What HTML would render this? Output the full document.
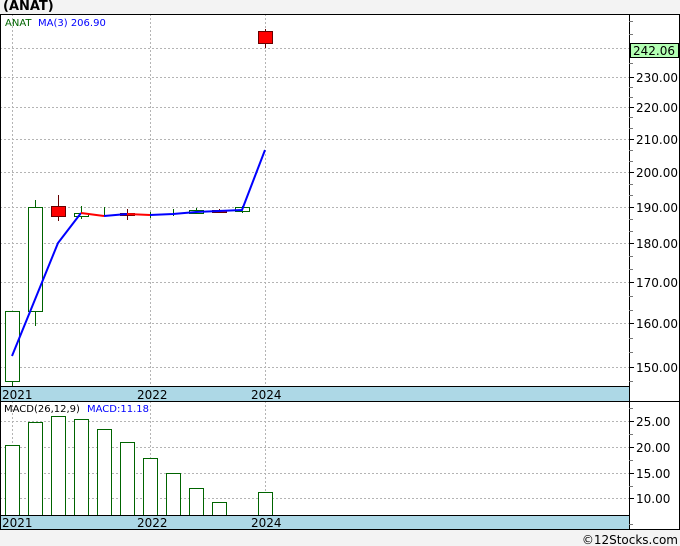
<!DOCTYPE html><html><head><style>
body{margin:0;width:680px;height:546px;background:#f3f3f3;font-family:"DejaVu Sans","Liberation Sans",sans-serif;overflow:hidden;position:relative}
.t{position:absolute;white-space:nowrap}
</style></head><body>
<div class="t" style="left:3px;top:-1px;font:bold 13px 'DejaVu Sans',sans-serif;color:#000">(ANAT)</div>
<svg width="680" height="546" style="position:absolute;left:0;top:0" font-family="DejaVu Sans, Liberation Sans, sans-serif">
<rect x="0" y="14" width="680" height="516" fill="#fff"/>
<rect x="0" y="387" width="629" height="14" fill="#add8e6"/>
<rect x="0" y="515" width="629" height="15" fill="#add8e6"/>
<g stroke="#b4b4b4" stroke-dasharray="2,2" stroke-width="1">
<line x1="0" x2="629" y1="48.5" y2="48.5"/><line x1="0" x2="629" y1="77.5" y2="77.5"/><line x1="0" x2="629" y1="107.5" y2="107.5"/><line x1="0" x2="629" y1="139.5" y2="139.5"/><line x1="0" x2="629" y1="172.5" y2="172.5"/><line x1="0" x2="629" y1="207.5" y2="207.5"/><line x1="0" x2="629" y1="243.5" y2="243.5"/><line x1="0" x2="629" y1="282.5" y2="282.5"/><line x1="0" x2="629" y1="323.5" y2="323.5"/><line x1="0" x2="629" y1="367.5" y2="367.5"/>
<line x1="0" x2="629" y1="421.5" y2="421.5"/><line x1="0" x2="629" y1="447.5" y2="447.5"/><line x1="0" x2="629" y1="473.5" y2="473.5"/><line x1="0" x2="629" y1="498.5" y2="498.5"/>
<line x1="12.5" x2="12.5" y1="14" y2="387"/><line x1="150.5" x2="150.5" y1="14" y2="387"/><line x1="265.5" x2="265.5" y1="14" y2="387"/>
<line x1="12.5" x2="12.5" y1="401" y2="515"/><line x1="150.5" x2="150.5" y1="401" y2="515"/><line x1="265.5" x2="265.5" y1="401" y2="515"/>
</g>
<g stroke="#006400" fill="#fff">
<line x1="12.5" x2="12.5" y1="381" y2="386"/><rect x="5.5" y="311.5" width="14" height="70"/>
<line x1="35.5" x2="35.5" y1="200" y2="326"/><rect x="28.5" y="207.5" width="14" height="104"/>
<line x1="81.5" x2="81.5" y1="206" y2="219"/><rect x="74.5" y="213.5" width="14" height="3"/>
<line x1="104.5" x2="104.5" y1="207" y2="216"/><line x1="150.5" x2="150.5" y1="212" y2="218"/><line x1="173.5" x2="173.5" y1="209" y2="216"/>
<line x1="196.5" x2="196.5" y1="208" y2="214"/><rect x="189.5" y="210.5" width="14" height="3"/>
<line x1="242.5" x2="242.5" y1="206" y2="213"/><rect x="235.5" y="207.5" width="14" height="4"/>
</g>
<g stroke="#600" fill="#f00">
<line x1="58.5" x2="58.5" y1="195" y2="221"/><rect x="51.5" y="206.5" width="14" height="10"/>
<line x1="127.5" x2="127.5" y1="209" y2="220"/><rect x="120.5" y="213.5" width="14" height="2"/>
<line x1="219.5" x2="219.5" y1="209" y2="213"/><rect x="212.5" y="210.5" width="14" height="2"/>
<line x1="265.5" x2="265.5" y1="29" y2="48"/><rect x="258.5" y="31.5" width="14" height="12"/>
</g>
<polyline fill="none" stroke="#00f" stroke-width="2" points="12,356 58,243 81,213"/>
<polyline fill="none" stroke="#f00" stroke-width="2" points="81,213 104,216"/>
<polyline fill="none" stroke="#00f" stroke-width="2" points="104,216 127,214"/>
<polyline fill="none" stroke="#f00" stroke-width="2" points="127,214 150,215"/>
<polyline fill="none" stroke="#00f" stroke-width="2" points="150,215 173,214 196,212 219,211 242,210 265,150"/>
<g stroke="#006400" fill="#fff">
<rect x="5.5" y="445.5" width="14" height="70"/><rect x="28.5" y="422.5" width="14" height="93"/><rect x="51.5" y="416.5" width="14" height="99"/><rect x="74.5" y="419.5" width="14" height="96"/><rect x="97.5" y="429.5" width="14" height="86"/><rect x="120.5" y="442.5" width="14" height="73"/><rect x="143.5" y="458.5" width="14" height="57"/><rect x="166.5" y="473.5" width="14" height="42"/><rect x="189.5" y="488.5" width="14" height="27"/><rect x="212.5" y="502.5" width="14" height="13"/><rect x="258.5" y="492.5" width="14" height="23"/>
</g>
<g stroke="#000" fill="none">
<rect x="0.5" y="14.5" width="679" height="515"/>
<line x1="629.5" x2="629.5" y1="14" y2="530"/>
<line x1="0" x2="629" y1="386.5" y2="386.5"/><line x1="0" x2="680" y1="401.5" y2="401.5"/><line x1="0" x2="629" y1="515.5" y2="515.5"/>
</g>
<g stroke="#000">
<line x1="629" x2="634" y1="77.5" y2="77.5"/><line x1="629" x2="634" y1="107.5" y2="107.5"/><line x1="629" x2="634" y1="139.5" y2="139.5"/><line x1="629" x2="634" y1="172.5" y2="172.5"/><line x1="629" x2="634" y1="207.5" y2="207.5"/><line x1="629" x2="634" y1="243.5" y2="243.5"/><line x1="629" x2="634" y1="282.5" y2="282.5"/><line x1="629" x2="634" y1="323.5" y2="323.5"/><line x1="629" x2="634" y1="367.5" y2="367.5"/>
<line x1="629" x2="634" y1="421.5" y2="421.5"/><line x1="629" x2="634" y1="447.5" y2="447.5"/><line x1="629" x2="634" y1="473.5" y2="473.5"/><line x1="629" x2="634" y1="498.5" y2="498.5"/>
</g>
<g stroke="#777">
<line x1="629" x2="633" y1="21.5" y2="21.5"/><line x1="629" x2="633" y1="34.5" y2="34.5"/><line x1="629" x2="633" y1="63.5" y2="63.5"/><line x1="629" x2="633" y1="87.5" y2="87.5"/><line x1="629" x2="633" y1="97.5" y2="97.5"/><line x1="629" x2="633" y1="117.5" y2="117.5"/><line x1="629" x2="633" y1="128.5" y2="128.5"/><line x1="629" x2="633" y1="150.5" y2="150.5"/><line x1="629" x2="633" y1="161.5" y2="161.5"/><line x1="629" x2="633" y1="184.5" y2="184.5"/><line x1="629" x2="633" y1="195.5" y2="195.5"/><line x1="629" x2="633" y1="219.5" y2="219.5"/><line x1="629" x2="633" y1="231.5" y2="231.5"/><line x1="629" x2="633" y1="256.5" y2="256.5"/><line x1="629" x2="633" y1="269.5" y2="269.5"/><line x1="629" x2="633" y1="296.5" y2="296.5"/><line x1="629" x2="633" y1="310.5" y2="310.5"/><line x1="629" x2="633" y1="338.5" y2="338.5"/><line x1="629" x2="633" y1="352.5" y2="352.5"/><line x1="629" x2="633" y1="381.5" y2="381.5"/>
<line x1="629" x2="633" y1="408.5" y2="408.5"/><line x1="629" x2="633" y1="434.5" y2="434.5"/><line x1="629" x2="633" y1="460.5" y2="460.5"/><line x1="629" x2="633" y1="486.5" y2="486.5"/><line x1="629" x2="633" y1="524.5" y2="524.5"/>
</g>
<rect x="630.5" y="43.5" width="48" height="14" fill="#b3ffb3" stroke="#000"/>
<g font-size="12" fill="#000">
<text x="633" y="55">242.06</text>
<text x="636" y="82">230.00</text><text x="636" y="112">220.00</text><text x="636" y="144">210.00</text><text x="636" y="177">200.00</text><text x="636" y="212">190.00</text><text x="636" y="248">180.00</text><text x="636" y="287">170.00</text><text x="636" y="328">160.00</text><text x="636" y="372">150.00</text>
<text x="636" y="426">25.00</text><text x="636" y="452">20.00</text><text x="636" y="478">15.00</text><text x="636" y="503">10.00</text>
<text x="2" y="399">2021</text><text x="137" y="399">2022</text><text x="251" y="399">2024</text>
<text x="2" y="527">2021</text><text x="137" y="527">2022</text><text x="251" y="527">2024</text>
</g>
<text x="5" y="26" font-size="10" fill="#006400">ANAT</text>
<text x="38" y="26" font-size="10" fill="#00f">MA(3)  206.90</text>
<text x="4" y="412" font-size="10" fill="#000">MACD(26,12,9)</text>
<text x="87" y="412" font-size="10" fill="#00f">MACD:11.18</text>
<text x="678" y="544" font-size="12" fill="#000" text-anchor="end">©12Stocks.com</text>
</svg>
</body></html>
